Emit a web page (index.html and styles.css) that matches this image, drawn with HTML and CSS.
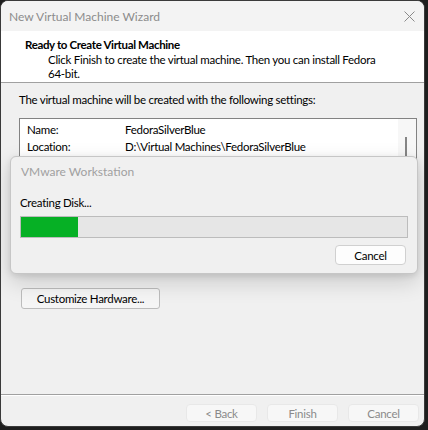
FILE: index.html
```html
<!DOCTYPE html>
<html>
<head>
<meta charset="utf-8">
<link rel="stylesheet" href="styles.css">
</head>
<body>
<div class="window">
  <div class="titlebar">
    <span class="title">New Virtual Machine Wizard</span>
    <svg class="close" width="11" height="11" viewBox="0 0 11 11"><path d="M0.5 0.5 L10.5 10.5 M10.5 0.5 L0.5 10.5" stroke="#8a8a8a" stroke-width="1" fill="none"/></svg>
  </div>
  <div class="header">
    <div class="heading">Ready to Create Virtual Machine</div>
    <div class="desc">Click Finish to create the virtual machine. Then you can install Fedora<br>64-bit.</div>
  </div>
  <div class="body">
    <div class="intro">The virtual machine will be created with the following settings:</div>
    <div class="listbox">
      <div class="rows">
        <div class="row"><span class="key">Name:</span><span>FedoraSilverBlue</span></div>
        <div class="row"><span class="key">Location:</span><span>D:\Virtual Machines\FedoraSilverBlue</span></div>
      </div>
      <div class="scrollbar"><div class="thumb"></div></div>
    </div>
    <button class="btn custom">Customize Hardware...</button>
  </div>
  <div class="footer">
    <button class="btn ghost">&lt; Back</button>
    <button class="btn ghost">Finish</button>
    <button class="btn ghost">Cancel</button>
  </div>
  <div class="dialog">
    <div class="dtitle">VMware Workstation</div>
    <div class="dlabel">Creating Disk...</div>
    <div class="progress"><div class="fill" style="width:57px"></div></div>
    <div class="dactions"><button class="btn dcancel">Cancel</button></div>
  </div>
</div>
</body>
</html>
```
FILE: styles.css
```css
* { box-sizing: border-box; }
html, body { margin: 0; padding: 0; }
body {
  background: #1e1e1e;
  width: 428px;
  height: 430px;
  font-family: Lato, "Noto Sans", sans-serif;
  font-size: 11.5px;
  letter-spacing: -0.28px;
  color: #000;
}
.window {
  position: relative;
  width: 425px;
  height: 427px;
  border: 1px solid #3a3a3a;
  border-radius: 8px;
  overflow: hidden;
  background: #f0f0f0;
  display: flex;
  flex-direction: column;
}
.titlebar {
  height: 30px;
  flex: none;
  background: #f3f3f3;
  display: flex;
  align-items: center;
  justify-content: space-between;
  padding: 0 8px 0 8px;
}
.title { color: #8c8c8c; font-size: 12px; letter-spacing: 0; }
.close { margin-right: 1px; }
.header {
  flex: none;
  background: #fff;
  padding: 6px 0 0 24px;
  border-bottom: 1px solid #a0a0a0;
  height: 52px;
}
.heading { font-weight: bold; line-height: 16px; font-size: 11.5px; letter-spacing: -0.35px; }
.desc { padding-left: 23px; line-height: 14px; }
.body {
  flex: 1;
  padding: 9px 7px 0 18px;
  display: flex;
  flex-direction: column;
  align-items: flex-start;
}
.intro { line-height: 16px; }
.listbox {
  margin-top: 10px;
  width: 100%;
  height: 150px;
  background: #fff;
  border: 1px solid #828282;
  display: flex;
}
.rows { flex: 1; padding: 2px 0 0 7px; }
.row { line-height: 17px; display: flex; }
.key { width: 98px; flex: none; }
.scrollbar {
  width: 18px;
  flex: none;
  background: #f7f7f7;
  padding-top: 18px;
}
.thumb { width: 2px; height: 80px; background: #858585; margin-left: 7px; }
.btn {
  font-family: inherit;
  font-size: 11.5px;
  letter-spacing: -0.28px;
  color: #000;
  background: #fdfdfd;
  border: 1px solid #d0d0d0;
  border-radius: 4px;
  padding: 0;
}
.custom {
  margin: 20px 0 0 2px;
  width: 139px;
  height: 21px;
  background: #f5f5f5;
  border-color: #bcbcbc;
  border-radius: 3px;
}
.footer {
  flex: none;
  height: 32px;
  border-top: 1px solid #a0a0a0;
  box-shadow: inset 0 1px 0 #fff;
  display: flex;
  justify-content: flex-end;
  gap: 10px;
  padding: 9px 5px 0 0;
}
.ghost {
  width: 71px;
  height: 18px;
  background: #f7f7f7;
  border-color: #e8e8e8;
  color: #8a8a8a;
}
.dialog {
  position: absolute;
  left: 9px;
  top: 155px;
  width: 408px;
  height: 118px;
  background: #f0f0f0;
  border: 1px solid #c6c6c6;
  border-radius: 6px;
  box-shadow: 0 8px 22px rgba(0,0,0,0.16), 0 2px 6px rgba(0,0,0,0.10);
  padding: 0 9px 0 9px;
  display: flex;
  flex-direction: column;
}
.dtitle { height: 30px; line-height: 30px; color: #a0a0a0; font-size: 12px; letter-spacing: 0; padding-left: 1px; }
.dlabel { margin-top: 8px; line-height: 16px; }
.progress {
  margin-top: 5px;
  height: 22px;
  background: #e6e6e6;
  border: 1px solid #bcbcbc;
}
.fill { height: 100%; background: #06b025; }
.dactions { margin-top: 7px; display: flex; justify-content: flex-end; padding-right: 2px; }
.dcancel { width: 71px; height: 20px; }
```
